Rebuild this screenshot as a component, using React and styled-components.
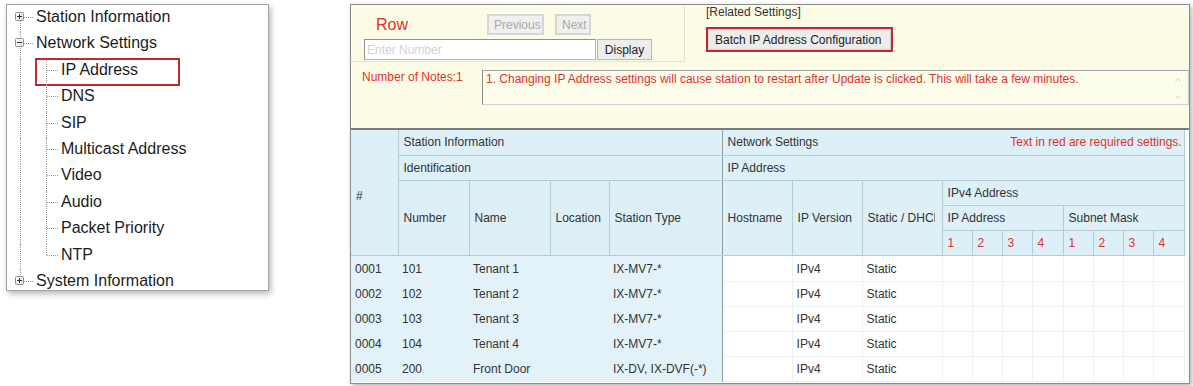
import React from 'react';
import styled, { createGlobalStyle } from 'styled-components';
import { ChevronUp, ChevronDown } from 'lucide-react';

const COLORS = {
  red: '#e2302b',
  frame: '#c8262f',
  text: '#333',
  note: '#fcfce6',
  head: '#ddeff7',
  info: '#e3f2f8',
  grid: '#b6cbd3',
  divider: '#8f9fa6',
};

const GlobalStyle = createGlobalStyle`
  html, body { margin: 0; padding: 0; background: #fff; }
  body { font-family: 'Liberation Sans', Arial, sans-serif; }
  * { box-sizing: border-box; }
`;

const Page = styled.div`
  display: flex;
  align-items: flex-start;
  gap: 81px;
  width: 1193px;
  height: 386px;
  padding: 4px 0 0 6px;
`;

/* ---------- tree ---------- */

const TreePanel = styled.div`
  width: 263px;
  height: 287px;
  padding-top: 1px;
  overflow: hidden;
  background: #fff;
  border: 1px solid #a3a3a3;
  box-shadow: 2px 3px 6px rgba(0, 0, 0, 0.28);
  font-size: 16px;
  color: #1c1c1c;
`;

const TreeRow = styled.div`
  display: flex;
  align-items: flex-start;
  height: 26.4px;
  line-height: 22px;
`;

const Gutter = styled.span`
  position: relative;
  flex-shrink: 0;
  width: ${p => p.$w}px;
  height: 100%;
  padding: 6px 0 0 8px;

  &::before {
    content: '';
    display: ${p => (p.$line ? 'block' : 'none')};
    position: absolute;
    left: ${p => p.$x}px;
    top: ${p => (p.$line === 'bottom' ? '11px' : '0')};
    bottom: ${p => (p.$line === 'top' ? 'calc(100% - 11px)' : '0')};
    border-left: 1px dotted #9a9a9a;
  }

  &::after {
    content: '';
    display: ${p => (p.$hw ? 'block' : 'none')};
    position: absolute;
    left: ${p => p.$hx}px;
    width: ${p => p.$hw}px;
    top: 11px;
    border-top: 1px dotted #9a9a9a;
  }

  svg {
    position: relative;
    z-index: 1;
    display: block;
  }
`;

const ChildBody = styled.span`
  display: flex;
  height: 100%;
  width: ${p => (p.$selected ? '143px' : 'auto')};
  outline: ${p => (p.$selected ? `2px solid ${COLORS.frame}` : 'none')};
  outline-offset: -1px;
`;

const TreeLabel = styled.span`
  white-space: nowrap;
`;

const Expander = ({ open }) => (
  <svg width="9" height="9" viewBox="0 0 9 9">
    <defs>
      <linearGradient id={open ? 'exo' : 'exc'} x1="0" y1="0" x2="1" y2="1">
        <stop offset="0" stopColor="#ffffff" />
        <stop offset="1" stopColor="#dcdcdc" />
      </linearGradient>
    </defs>
    <rect x="0.5" y="0.5" width="8" height="8" rx="1" fill={`url(#${open ? 'exo' : 'exc'})`} stroke="#8e8e8e" />
    <line x1="2" y1="4.5" x2="7" y2="4.5" stroke="#333" />
    {!open && <line x1="4.5" y1="2" x2="4.5" y2="7" stroke="#333" />}
  </svg>
);

const CHILDREN = ['IP Address', 'DNS', 'SIP', 'Multicast Address', 'Video', 'Audio', 'Packet Priority', 'NTP'];

const RootNode = ({ label, open, line }) => (
  <TreeRow>
    <Gutter $w={29} $x={13} $line={line} $hx={17} $hw={9}>
      <Expander open={open} />
    </Gutter>
    <TreeLabel>{label}</TreeLabel>
  </TreeRow>
);

const ChildNode = ({ label, last, selected }) => (
  <TreeRow>
    <Gutter $w={29} $x={13} $line="full" />
    <ChildBody $selected={selected}>
      <Gutter $w={25} $x={10} $line={last ? 'top' : 'full'} $hx={11} $hw={11} />
      <TreeLabel>{label}</TreeLabel>
    </ChildBody>
  </TreeRow>
);

const Tree = () => (
  <TreePanel>
    <RootNode label="Station Information" line="bottom" />
    <RootNode label="Network Settings" open line="full" />
    {CHILDREN.map((c, i) => (
      <ChildNode key={c} label={c} selected={i === 0} last={i === CHILDREN.length - 1} />
    ))}
    <RootNode label="System Information" line="top" />
  </TreePanel>
);

/* ---------- settings panel ---------- */

const Panel = styled.div`
  display: flex;
  flex-direction: column;
  width: 840px;
  height: 380px;
  overflow: hidden;
  background: #fff;
  border: 1px solid #8c8c8c;
  box-shadow: 2px 2px 5px rgba(0, 0, 0, 0.3);
  font-size: 12px;
  color: ${COLORS.text};
`;

const Toolbar = styled.div`
  display: flex;
  flex-direction: column;
  flex-shrink: 0;
  height: 125px;
  background: ${COLORS.note};
  border-bottom: 2px solid #7b7b7b;
`;

const UpperRow = styled.div`
  display: flex;
  height: 57px;
`;

const RowBox = styled.div`
  display: flex;
  flex-direction: column;
  gap: 4px;
  width: 334px;
  padding: 9px 0 0 13px;
  border-right: 1px solid #e3e3d0;
  border-bottom: 1px solid #e3e3d0;
`;

const Line = styled.div`
  display: flex;
  align-items: center;
  height: 21px;
  gap: ${p => p.$gap || 0}px;
`;

const RowLabel = styled.span`
  width: 123px;
  padding-left: 12px;
  font-size: 16px;
  color: ${COLORS.red};
`;

const Button = styled.button`
  height: 21px;
  padding: 0 5px;
  font: 12px 'Liberation Sans', Arial, sans-serif;
  color: ${p => (p.disabled ? '#a9a9a9' : '#222')};
  background: ${p => (p.disabled ? '#f0f0f0' : '#ededed')};
  border: ${p => (p.disabled ? '2px solid #d6d6d6' : '1px solid #b8b8b8')};
  border-radius: 0;
  width: ${p => (p.$w ? `${p.$w}px` : 'auto')};
  margin-left: ${p => p.$ml || 0}px;
`;

const NumberInput = styled.input`
  width: 232px;
  height: 21px;
  padding: 0 2px;
  font: 12px 'Liberation Sans', Arial, sans-serif;
  background: #fff;
  border: 1px solid #b5b5b5;
  border-top-color: #8f8f8f;
  border-left-color: #8f8f8f;

  &::placeholder {
    color: #d2d2d2;
  }
`;

const RelatedBlock = styled.div`
  display: flex;
  flex-direction: column;
  gap: 8px;
  padding-left: 21px;
`;

const RelatedTitle = styled.span`
  line-height: 14px;
`;

const BatchFrame = styled.div`
  display: flex;
  width: 187px;
  height: 25px;
  border: 2px solid ${COLORS.frame};
`;

const BatchButton = styled.button`
  flex: 1;
  padding: 0 0 0 6px;
  text-align: left;
  font: 12px 'Liberation Sans', Arial, sans-serif;
  color: #222;
  background: #ececec;
  border: 1px solid #d2d2d2;
`;

const NotesRow = styled.div`
  display: flex;
  padding: 8px 0 0 11px;
`;

const NotesLabel = styled.span`
  width: 120px;
  line-height: 14px;
  color: ${COLORS.red};
`;

const NoteBox = styled.div`
  display: flex;
  flex: 1;
  height: 35px;
  background: #fdfdec;
  border: 1px solid #d0d0d0;
  border-top-color: #a3a3a3;
  border-left-color: #8a8a8a;
`;

const NoteText = styled.div`
  flex: 1;
  padding: 1px 3px;
  line-height: 14px;
  color: ${COLORS.red};
`;

const NoteScroll = styled.div`
  display: flex;
  flex-direction: column;
  align-items: center;
  justify-content: space-between;
  width: 20px;
  padding: 4px 0 2px;
  color: #b4b4b4;
`;

/* ---------- table ---------- */

const Grid = styled.table`
  width: 833px;
  table-layout: fixed;
  border-collapse: collapse;
  font-size: 12px;
  color: ${COLORS.text};

  tr {
    height: 25.2px;
  }
`;

const Th = styled.th`
  padding: ${p => p.$pt || 0}px ${p => p.$pr ?? 5}px 0 5px;
  text-align: left;
  font-weight: normal;
  white-space: nowrap;
  overflow: hidden;
  vertical-align: middle;
  color: ${p => (p.$red ? COLORS.red : COLORS.text)};
  background: ${COLORS.head};
  border: 1px solid ${COLORS.grid};
  ${p => p.$top && 'border-top: none;'}
  ${p => p.$first && 'border-left: none;'}
  ${p => p.$divider && `border-right: 1px solid ${COLORS.divider};`}
`;

const Clip = styled.span`
  display: block;
  width: ${p => p.$w}px;
  overflow: hidden;
`;

const HeadSplit = styled.div`
  display: flex;
  justify-content: space-between;
`;

const RedNote = styled.span`
  color: ${COLORS.red};
`;

const Td = styled.td`
  padding: 0 4px;
  white-space: nowrap;
  overflow: hidden;
  background: ${p => (p.$zone === 'info' ? COLORS.info : '#fff')};
  border: ${p => (p.$zone === 'info' ? 'none' : '1px solid #eef2f3')};
  ${p => p.$divider && `border-right: 1px solid ${COLORS.divider};`}
`;

const COLS = [47, 71, 81, 59, 113, 70, 70, 80, 30, 30, 30, 31, 30, 30, 30, 31];

const ROWS = [
  ['0001', '101', 'Tenant 1', 'IX-MV7-*'],
  ['0002', '102', 'Tenant 2', 'IX-MV7-*'],
  ['0003', '103', 'Tenant 3', 'IX-MV7-*'],
  ['0004', '104', 'Tenant 4', 'IX-MV7-*'],
  ['0005', '200', 'Front Door', 'IX-DV, IX-DVF(-*)'],
];

const StationTable = () => (
  <Grid>
    <colgroup>
      {COLS.map((w, i) => (
        <col key={i} style={{ width: w }} />
      ))}
    </colgroup>
    <thead>
      <tr>
        <Th rowSpan={5} $top $first $pt={6}>#</Th>
        <Th colSpan={4} $top $divider>Station Information</Th>
        <Th colSpan={11} $top $pr={2}>
          <HeadSplit>
            <span>Network Settings</span>
            <RedNote>Text in red are required settings.</RedNote>
          </HeadSplit>
        </Th>
      </tr>
      <tr>
        <Th colSpan={4} $divider>Identification</Th>
        <Th colSpan={11}>IP Address</Th>
      </tr>
      <tr>
        <Th rowSpan={3}>Number</Th>
        <Th rowSpan={3}>Name</Th>
        <Th rowSpan={3}>Location</Th>
        <Th rowSpan={3} $divider>Station Type</Th>
        <Th rowSpan={3}>Hostname</Th>
        <Th rowSpan={3}>IP Version</Th>
        <Th rowSpan={3}>
          <Clip $w={67}>Static / DHCP</Clip>
        </Th>
        <Th colSpan={8}>IPv4 Address</Th>
      </tr>
      <tr>
        <Th colSpan={4}>IP Address</Th>
        <Th colSpan={4}>Subnet Mask</Th>
      </tr>
      <tr>
        {[1, 2, 3, 4, 1, 2, 3, 4].map((n, i) => (
          <Th key={i} $red>{n}</Th>
        ))}
      </tr>
    </thead>
    <tbody>
      {ROWS.map(([id, num, name, type]) => (
        <tr key={id}>
          <Td $zone="info">{id}</Td>
          <Td $zone="info">{num}</Td>
          <Td $zone="info">{name}</Td>
          <Td $zone="info" />
          <Td $zone="info" $divider>{type}</Td>
          <Td $zone="net" />
          <Td $zone="net">IPv4</Td>
          <Td $zone="net">Static</Td>
          {Array.from({ length: 8 }, (_, i) => (
            <Td key={i} $zone="net" />
          ))}
        </tr>
      ))}
    </tbody>
  </Grid>
);

const SettingsPanel = () => (
  <Panel>
    <Toolbar>
      <UpperRow>
        <RowBox>
          <Line>
            <RowLabel>Row</RowLabel>
            <Button disabled $w={57}>Previous</Button>
            <Button disabled $w={36} $ml={11}>Next</Button>
          </Line>
          <Line $gap={1}>
            <NumberInput placeholder="Enter Number" />
            <Button $w={55}>Display</Button>
          </Line>
        </RowBox>
        <RelatedBlock>
          <RelatedTitle>[Related Settings]</RelatedTitle>
          <BatchFrame>
            <BatchButton>Batch IP Address Configuration</BatchButton>
          </BatchFrame>
        </RelatedBlock>
      </UpperRow>
      <NotesRow>
        <NotesLabel>Number of Notes:1</NotesLabel>
        <NoteBox>
          <NoteText>
            1. Changing IP Address settings will cause station to restart after Update is clicked. This will take a few minutes.
          </NoteText>
          <NoteScroll>
            <ChevronUp size={10} strokeWidth={1.5} />
            <ChevronDown size={10} strokeWidth={1.5} />
          </NoteScroll>
        </NoteBox>
      </NotesRow>
    </Toolbar>
    <StationTable />
  </Panel>
);

const App = () => (
  <>
    <GlobalStyle />
    <Page>
      <Tree />
      <SettingsPanel />
    </Page>
  </>
);

export default App;
